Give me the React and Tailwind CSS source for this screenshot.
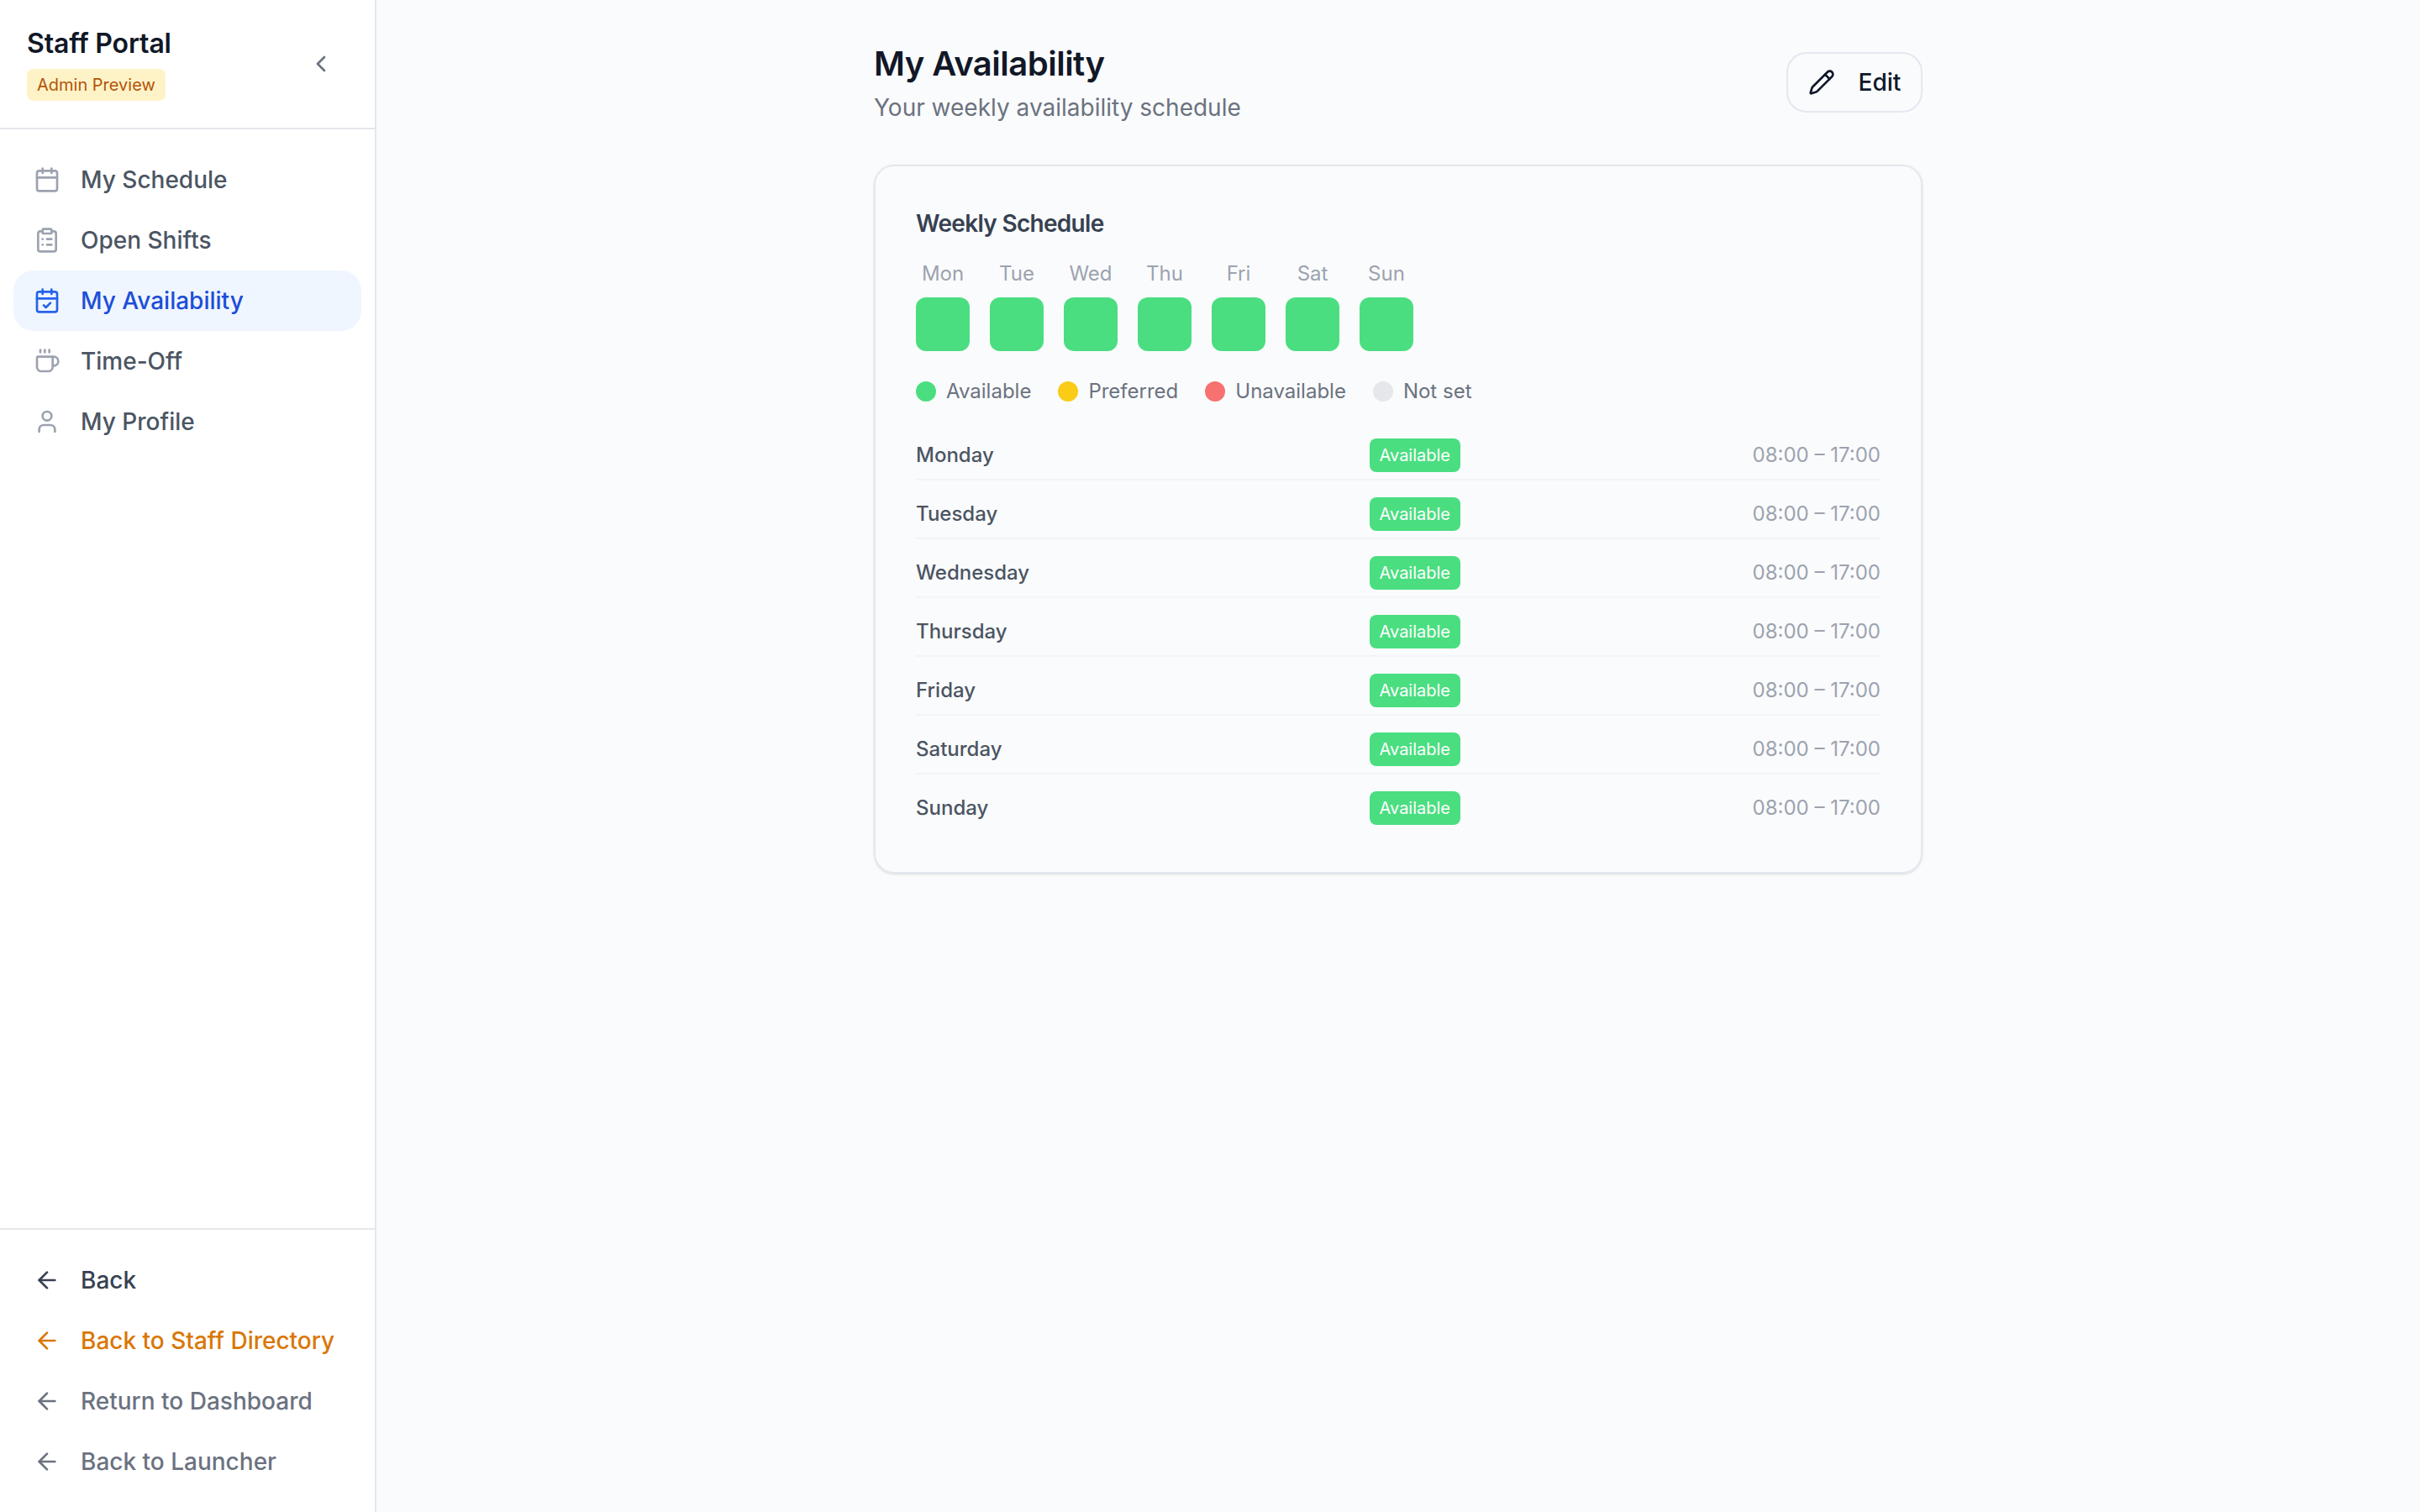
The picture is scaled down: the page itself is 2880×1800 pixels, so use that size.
import React from 'react';
import { Calendar, CalendarCheck, ChevronLeft, ClipboardList, Coffee, User, ArrowLeft, Pencil } from 'lucide-react';

const navItems = [
    { label: 'My Schedule', icon: Calendar },
    { label: 'Open Shifts', icon: ClipboardList },
    { label: 'My Availability', icon: CalendarCheck, active: true },
    { label: 'Time-Off', icon: Coffee },
    { label: 'My Profile', icon: User },
];

const backLinks = [
    { label: 'Back', className: 'text-[#374151]' },
    { label: 'Back to Staff Directory', className: 'text-[#d97706]' },
    { label: 'Return to Dashboard', className: 'text-[#6b7280]' },
    { label: 'Back to Launcher', className: 'text-[#6b7280]' },
];

const shortDays = ['Mon', 'Tue', 'Wed', 'Thu', 'Fri', 'Sat', 'Sun'];
const days = ['Monday', 'Tuesday', 'Wednesday', 'Thursday', 'Friday', 'Saturday', 'Sunday'];

const legend = [
    { label: 'Available', dot: 'bg-[#4ade80]' },
    { label: 'Preferred', dot: 'bg-[#facc15]' },
    { label: 'Unavailable', dot: 'bg-[#f87171]' },
    { label: 'Not set', dot: 'bg-[#e5e7eb]' },
];

const App = () => {
    return (
        <div className="flex h-screen bg-[#fafbfc] font-['Inter',sans-serif]">
            <aside className="flex h-full w-[448px] shrink-0 flex-col border-r-2 border-[#e5e7eb] bg-white">
                <div className="flex h-[154px] items-center justify-between border-b-2 border-[#e5e7eb] pl-[32px] pr-[48px]">
                    <div>
                        <div className="text-[32px] leading-[40px] font-semibold tracking-[-0.15px] text-[#111827]">Staff Portal</div>
                        <span className="mt-[10px] block w-fit rounded-[8px] bg-[#fef3c7] px-[12px] py-[4px] text-[20px] leading-[30px] text-[#b45309]">Admin Preview</span>
                    </div>
                    <ChevronLeft className="h-[32px] w-[32px] text-[#6b7280]" strokeWidth={2} />
                </div>
                <nav className="flex flex-1 flex-col px-[16px] pt-[24px]">
                    {navItems.map(item => (
                        <a key={item.label} className={`flex h-[72px] items-center gap-[24px] rounded-[24px] px-[24px] text-[28px] font-medium ${item.active ? 'bg-[#eff6ff] text-[#1d4ed8]' : 'text-[#4b5563]'}`}>
                            <item.icon className={`h-[32px] w-[32px] ${item.active ? 'text-[#2563eb]' : 'text-[#9ca3af]'}`} strokeWidth={2} />
                            {item.label}
                        </a>
                    ))}
                </nav>
                <div className="flex flex-col border-t-2 border-[#e5e7eb] px-[16px] py-[24px]">
                    {backLinks.map(link => (
                        <a key={link.label} className={`flex h-[72px] items-center gap-[24px] px-[24px] text-[28px] font-medium ${link.className}`}>
                            <ArrowLeft className="h-[32px] w-[32px]" strokeWidth={2} />
                            {link.label}
                        </a>
                    ))}
                </div>
            </aside>
            <main className="flex-1">
                <div className="mx-auto w-[1248px] pt-[48px]">
                    <div className="flex items-start justify-between">
                        <div>
                            <h1 className="text-[40px] leading-[56px] font-semibold tracking-[-0.5px] text-[#111827]">My Availability</h1>
                            <p className="mt-[4px] text-[28px] leading-[40px] text-[#6b7280]">Your weekly availability schedule</p>
                        </div>
                        <button className="mt-[14px] flex h-[72px] w-[162px] items-center justify-center gap-[28px] rounded-[24px] border-2 border-[#e2e8f0] text-[28px] font-medium text-[#0f172a]">
                            <Pencil className="h-[32px] w-[32px]" strokeWidth={2} />
                            Edit
                        </button>
                    </div>
                    <div className="mt-[48px] rounded-[24px] border-2 border-[#e2e8f0] p-[48px] shadow-sm">
                        <h2 className="text-[28px] leading-[40px] font-semibold tracking-[-0.7px] text-[#374151]">Weekly Schedule</h2>
                        <div className="mt-[24px] flex gap-[24px]">
                            {shortDays.map(day => (
                                <div key={day} className="flex w-[64px] flex-col items-center gap-[12px]">
                                    <span className="text-[24px] leading-[32px] text-[#9ca3af]">{day}</span>
                                    <div className="h-[64px] w-[64px] rounded-[12px] bg-[#4ade80]" />
                                </div>
                            ))}
                        </div>
                        <div className="mt-[32px] flex gap-[32px]">
                            {legend.map(item => (
                                <div key={item.label} className="flex items-center gap-[12px]">
                                    <span className={`h-[24px] w-[24px] rounded-full ${item.dot}`} />
                                    <span className="text-[24px] leading-[32px] text-[#6b7280]">{item.label}</span>
                                </div>
                            ))}
                        </div>
                        <div className="mt-[20px]">
                            {days.map((day, i) => (
                                <div key={day} className={`flex items-center justify-between pt-[20px] pb-[8px] ${i < days.length - 1 ? 'border-b-2 border-[#f3f4f6]' : ''}`}>
                                    <span className="w-[192px] text-[24px] leading-[32px] font-medium text-[#4b5563]">{day}</span>
                                    <span className="rounded-[8px] bg-[#4ade80] px-[12px] py-[4px] text-[20px] leading-[32px] text-white">Available</span>
                                    <span className="text-[24px] leading-[32px] text-[#9ca3af]">08:00 – 17:00</span>
                                </div>
                            ))}
                        </div>
                    </div>
                </div>
            </main>
        </div>
    );
};

export default App;
